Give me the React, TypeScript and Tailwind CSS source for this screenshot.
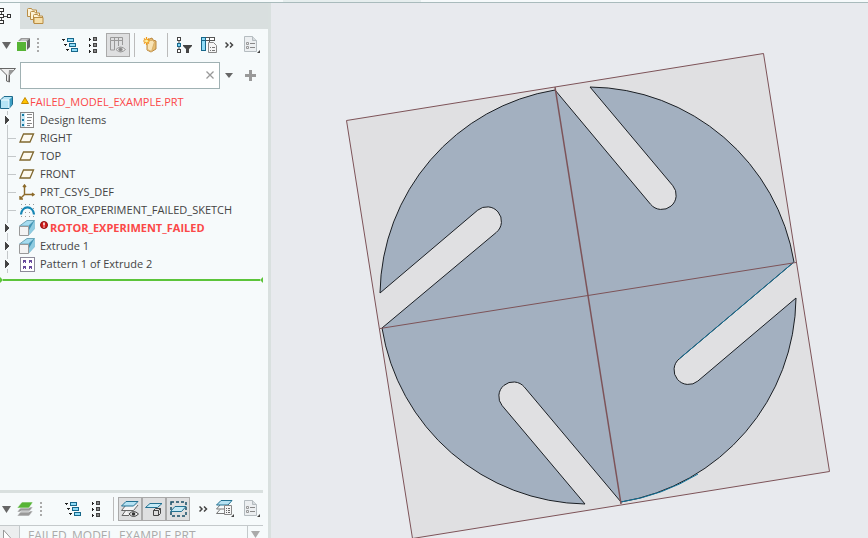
import { useState } from 'react';
import type { ReactNode } from 'react';

const toolButton = 'flex h-6 w-6 shrink-0 items-center justify-center';
const pressedButton =
  'flex h-6 w-6 shrink-0 items-center justify-center border border-[#aaa] bg-[#dedfe0]';

// ---------- small icons ----------

function TreeIcon() {
  return (
    <svg width="12" height="16" viewBox="0 0 12 16" fill="none" shapeRendering="crispEdges">
      <path d="M1.5 4v8M3 8h5" stroke="#555" />
      <path d="M-.5 .5h4v3h-4zM-.5 6.5h4v3h-4zM-.5 12.5h4v3h-4zM7.5 6.5h3v3h-3z" fill="#fff" stroke="#333" />
    </svg>
  );
}

function FoldersIcon() {
  return (
    <svg width="17" height="17" viewBox="0 0 17 17">
      {[0, 3, 6].map((o) => (
        <path
          key={o}
          d={`M${o + 0.5} ${o + 1.5}q0-1 1-1h3l1 1.5h4v6.5h-9z`}
          fill="#fdf3d8"
          stroke="#b98d45"
        />
      ))}
      <path d="M7 9.5h9v6H7z" fill="#f6dfa9" stroke="#b98d45" />
    </svg>
  );
}

function CaretIcon({ color = '#666' }: { color?: string }) {
  return (
    <svg width="9" height="7" viewBox="0 0 9 7">
      <path d="M0 0h9L4.500 7z" fill={color} />
    </svg>
  );
}

function CubeIcon() {
  return (
    <svg width="14" height="14" viewBox="0 0 14 14">
      <path d="M0 4l4-4h9L9 4z" fill="#999" />
      <path d="M9 4l4-4v9l-4 4z" fill="#666" />
      <path d="M3 3l2-2h6L9 3z" fill="#c4c4c4" />
      <path d="M0 4h9v9H0z" fill="#56b435" />
      <path d="M0 3.500h9.500V13" fill="none" stroke="#eee" />
    </svg>
  );
}

function Grip() {
  return (
    <svg width="2" height="14" viewBox="0 0 2 14" fill="#aaa">
      <path d="M0 0h2v2H0zM0 4h2v2H0zM0 8h2v2H0zM0 12h2v2H0z" />
    </svg>
  );
}

function ExpandTreeIcon() {
  return (
    <svg width="16" height="14" viewBox="0 0 16 14" shapeRendering="crispEdges">
      <path d="M0 1h3v1H2v1H1V2H0zM2 6h3v1H4v1H3V7H2zM4 11h3v1H6v1H5v-1H4z" fill="#222" />
      <path d="M5.500 .5h6v3h-6zM7.500 5.500h6v3h-6zM9.500 10.500h6v3h-6z" fill="#8fdcf8" stroke="#17678a" />
    </svg>
  );
}

function CollapseTreeIcon() {
  return (
    <svg width="8" height="16" viewBox="0 0 8 16" shapeRendering="crispEdges">
      <path d="M0 1h1v1h1v1H1v1H0zM0 7h1v1h1v1H1v1H0zM0 13h1v1h1v1H1v1H0z" fill="#222" />
      <path d="M4.500 .5h3v3h-3zM4.500 6.500h3v3h-3zM4.500 12.500h3v3h-3z" fill="#888" stroke="#444" />
    </svg>
  );
}

function ColumnsEyeIcon() {
  return (
    <svg width="16" height="16" viewBox="0 0 16 16" fill="none" stroke="#999">
      <path d="M.5 .5h12v3H.5zM.5 3.500v9.500h4V.5M8.500 .5V9M12.500 3v5" />
      <path d="M6 12.500q4.500-5 9.500 0q-5 5-9.500 0z" fill="#eee" />
      <circle cx="10.500" cy="12.500" r="1.800" fill="#888" />
    </svg>
  );
}

function NewGroupIcon() {
  return (
    <svg width="16" height="16" viewBox="0 0 16 16">
      <path d="M4 3l5-2 1 2 3 1v8l-5 3-4-2z" fill="#e6bd72" stroke="#bb8840" />
      <path d="M4.500 3.500h5l2 1.500-3 9.500-4-2z" fill="#f9e4b6" stroke="#d9b06a" />
      <path d="M3.500 0v8M0 4h7M1 1.500l5 5M6 1.500l-5 5" stroke="#f09a16" strokeWidth="1.200" />
      <circle cx="3.500" cy="4" r="1.500" fill="#fff3a0" />
    </svg>
  );
}

function TreeFilterIcon() {
  return (
    <svg width="16" height="16" viewBox="0 0 16 16">
      <path d="M2 3v10" stroke="#555" />
      <path d="M.5 .5h3v3h-3zM.5 12.500h3v3h-3z" fill="#fff" stroke="#444" shapeRendering="crispEdges" />
      <path d="M.5 6.500h3v3h-3z" fill="#7fd4f4" stroke="#17678a" shapeRendering="crispEdges" />
      <path d="M6 8h9v1l-3 3v4h-3v-4L6 9z" fill="#444" />
    </svg>
  );
}

function TreeColumnsIcon() {
  return (
    <svg width="16" height="16" viewBox="0 0 16 16">
      <path d="M.5 .5h13v3H.5z" fill="#fff" stroke="#555" shapeRendering="crispEdges" />
      <path d="M4.500 .5h4v3h-4zM8.500 3v3" fill="#fff" stroke="#555" shapeRendering="crispEdges" />
      <path d="M.5 .5h4v13h-4zM.5 3.500h4" fill="#8fdcf8" stroke="#17678a" shapeRendering="crispEdges" />
      <path d="M7.500 5.500h5l3 3v7h-8z" fill="#f5f5f5" stroke="#888" />
      <path d="M9 10.500h1M11 10.500h3M9 13.500h1M11 13.500h3" stroke="#777" />
    </svg>
  );
}

function MoreIcon() {
  return (
    <svg width="9" height="6" viewBox="0 0 9 6" fill="none" stroke="#444" strokeWidth="1.500">
      <path d="M.5 .5L3 3 .5 5.500M5 .5L7.500 3 5 5.500" />
    </svg>
  );
}

function SheetIcon() {
  return (
    <svg width="16" height="18" viewBox="0 0 16 18">
      <path d="M.5 .5h8l4 4v11H.5z" fill="#eceff1" stroke="#b5bcc0" />
      <path d="M8.500 .5v4h4" fill="#d6dbde" stroke="#b5bcc0" />
      <path d="M6 7.500h5M6 11.500h5" stroke="#888" />
      <path d="M2.500 6.500h2v2h-2zM2.500 10.500h2v2h-2z" fill="none" stroke="#999" />
      <path d="M16 14v3h-3z" fill="#444" />
    </svg>
  );
}

function FunnelIcon() {
  return (
    <svg width="16" height="15" viewBox="0 0 16 15">
      <path d="M0 .5h15.500l-6 6.500v7l-3-1V7z" fill="#eee" stroke="#666" />
      <path d="M9 2h5L9 7v6H8z" fill="#999" />
    </svg>
  );
}

function PartIcon() {
  return (
    <svg width="13" height="13" viewBox="0 0 13 13">
      <path d="M.5 4l3.500-3.500h8.500v8L9 12.500H.5z" fill="#b6e4f5" stroke="#1e6a8c" />
      <path d="M9 4l3-3v7.500l-3 3.500z" fill="#3d9fc4" />
      <path d="M1 4h8v8" fill="none" stroke="#f2fbff" />
    </svg>
  );
}

function WarningIcon() {
  return (
    <svg width="8" height="7" viewBox="0 0 8 7">
      <path d="M4 .5l3.500 6h-7z" fill="#ffc400" stroke="#c78a00" />
    </svg>
  );
}

function DesignItemsIcon() {
  return (
    <svg width="14" height="16" viewBox="0 0 14 16" shapeRendering="crispEdges">
      <path d="M.5 .5h13v15H.5z" fill="#fff" stroke="#888" />
      <path d="M1 1h4v14H1z" fill="#cfeaf5" />
      <path d="M2.500 2.500h1v1h-1zM2.500 7.500h1v1h-1zM2.500 12.500h1v1h-1z" stroke="#157ba6" fill="#7fcfee" />
      <path d="M7 2.500h5M7 5.500h5M7 8.500h4M7 11.500h5M7 13.500h3" stroke="#888" />
    </svg>
  );
}

function PlaneIcon() {
  return (
    <svg width="16" height="10" viewBox="0 0 16 10">
      <path d="M4.500 1h10L11 9H1z" fill="#fdfaf0" stroke="#80682f" strokeWidth="1.300" />
    </svg>
  );
}

function CsysIcon() {
  return (
    <svg width="16" height="16" viewBox="0 0 16 16" fill="none" stroke="#8c6a2a" strokeWidth="1.400">
      <path d="M5.500 1v9.500H15M5.500 10.500L1 15M4 3l1.500-2L7 3M13 9l2 1.500-2 1.500M1 12v3h3" />
    </svg>
  );
}

function SketchIcon() {
  return (
    <svg width="15" height="14" viewBox="0 0 15 14" fill="none">
      <path d="M1 1.500h13M1 5.500h13M1 9.500h13M1 13.500h13" stroke="#999" strokeDasharray="1 3" />
      <path d="M1 11.500C2 2 13 2 14 11.500" stroke="#1586b5" strokeWidth="2.200" />
    </svg>
  );
}

function ExtrudeIcon() {
  return (
    <svg width="16" height="16" viewBox="0 0 16 16">
      <path d="M.5 6L8 .5h7.500L9.500 6z" fill="#a5dcf0" stroke="#6fa5b8" />
      <path d="M9.500 6l6-5.500V9l-6 6.500z" fill="#3d93b5" />
      <path d="M9.500 11l6-10.500V9l-6 6.500z" fill="#8ecbe0" />
      <path d="M.5 6.500h9v9h-9z" fill="#f3f3f3" stroke="#999" />
    </svg>
  );
}

function PatternIcon() {
  return (
    <svg width="15" height="15" viewBox="0 0 15 15" shapeRendering="crispEdges">
      <path d="M.5 .5h14v14H.5z" fill="#fff" stroke="#8d8a99" />
      <path d="M3 3h3v3H3zM9 3h3v3H9zM3 9h3v3H3zM9 9h3v3H9z" fill="#66489c" />
      <path d="M4 5h1v1H4zM10 5h1v1h-1zM4 11h1v1H4zM10 11h1v1h-1z" fill="#fff" />
    </svg>
  );
}

function ErrorIcon() {
  return (
    <svg width="8" height="8" viewBox="0 0 8 8">
      <circle cx="4" cy="4" r="3.500" fill="#d21a1a" stroke="#8c1010" />
      <path d="M4 1.500v3M4 5.500v1" stroke="#fff" strokeWidth="1.500" />
    </svg>
  );
}

function LayersIcon() {
  return (
    <svg width="16" height="14" viewBox="0 0 16 14">
      <path d="M4 9h12l-4 5H0zM4 5h12l-4 5H0z" fill="#999" stroke="#f7fafb" strokeWidth=".6" />
      <path d="M5 0h11l-4 6H0z" fill="#56b435" stroke="#f7fafb" strokeWidth=".6" />
    </svg>
  );
}

function LayerEyeIcon() {
  return (
    <svg width="18" height="17" viewBox="0 0 18 17" fill="none">
      <path d="M5 4L0.500 9.500h12L17 4M5 9L1 14.500h7" stroke="#666" fill="#f4f4f4" />
      <path d="M5 .5h12L12.500 5H.5z" fill="#b5e2f3" stroke="#237191" />
      <path d="M8 13q4.500-5 9.500 0q-5 5-9.500 0z" fill="#eee" stroke="#444" />
      <circle cx="12.500" cy="13" r="1.800" fill="#333" />
    </svg>
  );
}

function LayerCubeIcon() {
  return (
    <svg width="18" height="16" viewBox="0 0 18 16" fill="none">
      <path d="M5 2.500h12L12.500 6.500H.5z" fill="#c5eaf6" stroke="#237191" />
      <path d="M8.500 9.500h5v5h-5zM8.500 9.500l2-2h5v5l-2 2M13.500 9.500l2-2" fill="#ddd" stroke="#444" />
    </svg>
  );
}

function LayerSelectIcon() {
  return (
    <svg width="17" height="16" viewBox="0 0 17 16" fill="none">
      <path d="M1 1h15v14H1z" stroke="#174e66" strokeWidth="1.500" strokeDasharray="3 2" />
      <path d="M5 5.500h11l-4.500 5H.5z" fill="#c5eaf6" stroke="#237191" />
    </svg>
  );
}

function LayerListIcon() {
  return (
    <svg width="18" height="18" viewBox="0 0 18 18" fill="none">
      <path d="M4 5L.5 9h9M4 9.500L.5 13.500h9" stroke="#777" />
      <path d="M5 .5h11L12 5H.5z" fill="#b5e2f3" stroke="#237191" />
      <path d="M8.500 5.500h7v9h-7z" fill="#f5f5f5" stroke="#888" />
      <path d="M10 8.500h1M12 8.500h2M10 10.500h1M12 10.500h2M10 12.500h1M12 12.500h2" stroke="#666" />
      <path d="M18 14v3h-3z" fill="#444" />
    </svg>
  );
}

// ---------- model tree ----------

type Item = {
  label: string;
  icon: ReactNode;
  branch?: boolean;
  failed?: boolean;
};

const items: Item[] = [
  { label: 'Design Items', icon: <DesignItemsIcon />, branch: true },
  { label: 'RIGHT', icon: <PlaneIcon /> },
  { label: 'TOP', icon: <PlaneIcon /> },
  { label: 'FRONT', icon: <PlaneIcon /> },
  { label: 'PRT_CSYS_DEF', icon: <CsysIcon /> },
  { label: 'ROTOR_EXPERIMENT_FAILED_SKETCH', icon: <SketchIcon /> },
  { label: 'ROTOR_EXPERIMENT_FAILED', icon: <ExtrudeIcon />, branch: true, failed: true },
  { label: 'Extrude 1', icon: <ExtrudeIcon />, branch: true },
  { label: 'Pattern 1 of Extrude 2', icon: <PatternIcon />, branch: true },
];

function TreeRow({ item }: { item: Item }) {
  return (
    <li className="flex h-[18px] items-center">
      <span className="flex w-[19px] shrink-0">
        <svg width="19" height="18" viewBox="0 0 19 18" shapeRendering="crispEdges">
          {item.branch ? (
            <>
              <path d="M7.500 0v4M7.500 14v4" stroke="#c4c8ca" />
              <path d="M5 5l4 4-4 4z" fill="#444" />
            </>
          ) : (
            <path d="M7.500 0v18M8 9.500h8" stroke="#c4c8ca" />
          )}
        </svg>
      </span>
      <span className="flex w-4 shrink-0 justify-center">{item.icon}</span>
      {item.failed ? (
        <span className="flex pl-[5px] font-bold text-[#fb4848]">
          <span className="mr-0.5 pt-0.5">
            <ErrorIcon />
          </span>
          {item.label}
        </span>
      ) : (
        <span className="pl-[5px]">{item.label}</span>
      )}
    </li>
  );
}

function ModelTree() {
  return (
    <div className="pt-1">
      <div className="flex h-[18px] items-center text-[#fb4848]">
        <PartIcon />
        <span className="ml-2 mr-px pb-1">
          <WarningIcon />
        </span>
        FAILED_MODEL_EXAMPLE.PRT
      </div>
      <ul>
        {items.map((item) => (
          <TreeRow key={item.label} item={item} />
        ))}
      </ul>
      <div className="mr-[5px] mt-1 flex items-center text-[#5cc43a]">
        <svg width="3" height="6" viewBox="0 0 3 6" fill="currentColor">
          <path d="M0 0l3 3-3 3z" />
        </svg>
        <span className="h-0.5 flex-1 bg-[#5cc43a]" />
        <svg width="3" height="6" viewBox="0 0 3 6" fill="currentColor">
          <path d="M3 0L0 3l3 3z" />
        </svg>
      </div>
    </div>
  );
}

// ---------- graphics area ----------

// Clockwise from the top: each rim arc is followed by the slot that cuts into it.
const rotorOutline = [
  'M590 87A209 209 0 0 1 794 262',
  'L679.2 358.9A14 14 0 0 0 697.8 381.1L796 298',
  'A209 209 0 0 1 621 502',
  'L524.4 387.1A14 14 0 0 0 502.2 405.7L585 504',
  'A209 209 0 0 1 382 328',
  'L496.3 232.4A14 14 0 0 0 477.7 210.2L380 293',
  'A209 209 0 0 1 555 90',
  'L650.6 204.3A14 14 0 0 0 672.8 185.7z',
].join('');

function Rotor() {
  return (
    <svg className="h-[535px] w-[597px]" viewBox="271 3 597 535" fill="none" role="img" aria-label="Rotor model">
      <path d="M346.500 120.500L763.500 53.500L829.500 471.500L412.500 538.500z" fill="#e0e0e2" stroke="#7d5358" />
      <path d={rotorOutline} fill="#a3b0c0" stroke="#1b1f24" />
      <path d="M794 262L679.200 358.900M698 474A209 209 0 0 1 621 502" stroke="#117299" />
      <path d="M380 328.500L796 262.500" stroke="#7d5358" />
      <path d="M555 87L621 504" stroke="#7d5358" strokeWidth="1.500" />
    </svg>
  );
}

export default function App() {
  const [query, setQuery] = useState('');

  return (
    <div className="flex h-screen flex-col overflow-hidden bg-[#e8eaee] font-['Open_Sans','Noto_Sans',sans-serif] text-[11px] leading-[18px] text-[#444]">
      <div className="flex h-[3px] shrink-0 border-b border-[#a9bbbc] bg-[#f6fafb]">
        <span className="ml-[283px] w-[138px] bg-[#e6eeee]" />
      </div>
      <div className="flex min-h-0 flex-1">
        <aside className="flex w-[271px] shrink-0 flex-col border-r-[3px] border-[#d9e0df] bg-[#f6fafb]">
          <div className="flex h-[26px] shrink-0 bg-[#d9dfdf]">
            <button aria-label="Model tree" className="flex w-5 items-center bg-[#f6fafb]">
              <TreeIcon />
            </button>
            <button aria-label="Folder browser" className="flex w-[30px] items-center justify-center">
              <FoldersIcon />
            </button>
          </div>

          <div className="flex h-8 shrink-0 items-center">
            <button aria-label="Tree menu" className="flex w-[17px] items-center pl-0.5">
              <CaretIcon />
            </button>
            <CubeIcon />
            <span className="ml-1.5 mr-[19px]"><Grip /></span>
            <button aria-label="Expand all" className={toolButton}><ExpandTreeIcon /></button>
            <button aria-label="Collapse all" className="flex h-6 w-[22px] shrink-0 items-center justify-center">
              <CollapseTreeIcon />
            </button>
            <button aria-label="Show columns" className={`${pressedButton} ml-0.5`}>
              <ColumnsEyeIcon />
            </button>
            <span className="mx-1 h-6 w-px bg-[#bbb]" />
            <button aria-label="New group" className={toolButton}><NewGroupIcon /></button>
            <span className="ml-1 mr-[5px] h-6 w-px bg-[#bbb]" />
            <button aria-label="Tree filters" className={toolButton}><TreeFilterIcon /></button>
            <button aria-label="Tree columns" className={toolButton}><TreeColumnsIcon /></button>
            <button aria-label="More" className="flex h-6 w-4 items-center justify-center"><MoreIcon /></button>
            <button aria-label="Settings" className="ml-[3px] flex h-6 w-6 items-center justify-center"><SheetIcon /></button>
          </div>

          <div className="flex h-7 shrink-0 items-center">
            <span className="flex w-5 shrink-0"><FunnelIcon /></span>
            <label className="flex h-[27px] w-[200px] shrink-0 items-center border border-[#a0b1b3] bg-white">
              <input
                aria-label="Search tree"
                className="min-w-0 flex-1 bg-transparent px-1 outline-none"
                value={query}
                onChange={(e) => setQuery(e.target.value)}
              />
              <button aria-label="Clear" className="px-[5px]" onClick={() => setQuery('')}>
                <svg width="8" height="8" viewBox="0 0 8 8" stroke="#999" strokeWidth="1.300">
                  <path d="M.5 .5l7 7M7.500 .5l-7 7" />
                </svg>
              </button>
            </label>
            <button aria-label="Search options" className="flex w-[18px] justify-center">
              <svg width="8" height="5" viewBox="0 0 8 5"><path d="M0 0h8L4 5z" fill="#666" /></svg>
            </button>
            <button aria-label="Add" className="flex w-6 justify-center">
              <svg width="11" height="11" viewBox="0 0 11 11"><path d="M4 0h3v4h4v3H7v4H4V7H0V4h4z" fill="#999" /></svg>
            </button>
          </div>

          <ModelTree />

          <div className="mr-[5px] mt-auto h-[3px] shrink-0 bg-[#d9e0df]" />
          <div className="flex h-8 shrink-0 items-center">
            <button aria-label="Layer menu" className="flex w-[17px] items-center pl-0.5">
              <CaretIcon />
            </button>
            <LayersIcon />
            <span className="ml-[7px] mr-[19px]"><Grip /></span>
            <button aria-label="Expand layers" className={toolButton}><ExpandTreeIcon /></button>
            <button aria-label="Collapse layers" className="flex h-6 w-[22px] shrink-0 items-center justify-center">
              <CollapseTreeIcon />
            </button>
            <span className="ml-[6px] mr-1 h-6 w-px bg-[#bbb]" />
            <button aria-label="Show layers" className={pressedButton}><LayerEyeIcon /></button>
            <button aria-label="Isolate layers" className={pressedButton}><LayerCubeIcon /></button>
            <button aria-label="Select layers" className={pressedButton}><LayerSelectIcon /></button>
            <button aria-label="More layer tools" className="ml-1 flex h-6 w-[18px] items-center justify-center"><MoreIcon /></button>
            <button aria-label="Layer list" className="ml-px flex h-6 w-6 items-center justify-center"><LayerListIcon /></button>
            <button aria-label="Layer settings" className="ml-[3px] flex h-6 w-6 items-center justify-center"><SheetIcon /></button>
          </div>
          <div className="mr-[5px] flex h-[13px] shrink-0 border-t border-[#c4c9cb] text-xs leading-[18px] text-[#aaa]">
            <span className="w-5 shrink-0 overflow-hidden border-r border-[#c4c9cb] bg-[#eceeef]">
              <svg width="12" height="13" viewBox="0 0 12 13"><path d="M3.500 4v12l8-3z" fill="#fff" stroke="#999" /></svg>
            </span>
            <span className="flex-1 whitespace-nowrap pl-2 pt-px">FAILED_MODEL_EXAMPLE.PRT</span>
            <span className="flex w-4 items-end justify-center border-l border-[#c4c9cb]">
              <CaretIcon color="#aaa" />
            </span>
          </div>
        </aside>
        <main className="min-w-0 flex-1">
          <Rotor />
        </main>
      </div>
    </div>
  );
}
